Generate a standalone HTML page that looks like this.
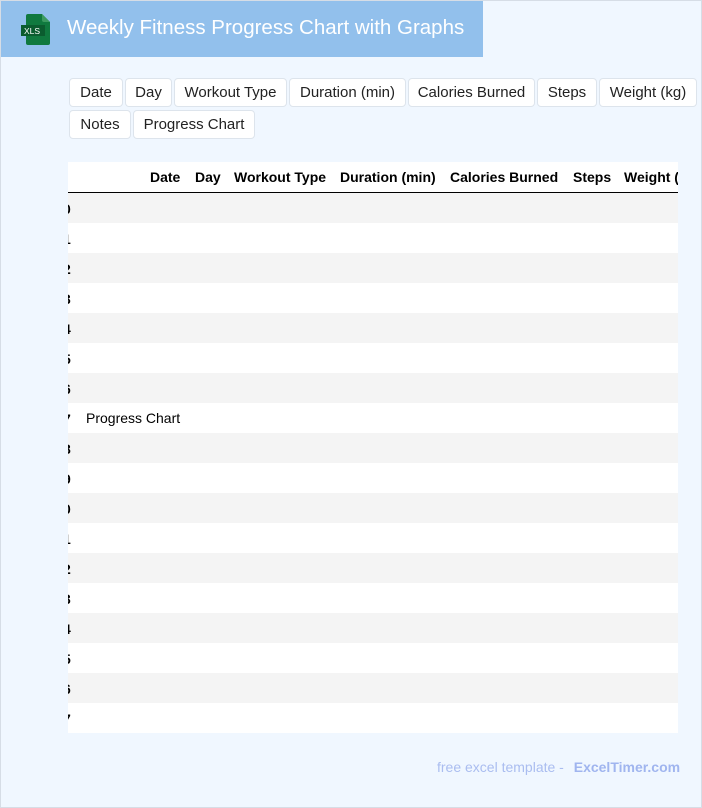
<!DOCTYPE html>
<html><head><meta charset="utf-8"><style>
*{margin:0;padding:0;box-sizing:border-box}
body{width:702px;height:808px;background:#f0f7ff;font-family:"Liberation Sans",sans-serif;position:relative;overflow:hidden}
.frame{position:absolute;left:0;top:0;width:702px;height:808px;border:1px solid #d6dde6}
.hdr{position:absolute;left:1px;top:1px;width:482px;height:56px;background:#92c0ec}
.hdr h1{position:absolute;left:66px;top:15px;font-size:20.5px;font-weight:normal;color:#fff;white-space:nowrap}
.btn{position:absolute;height:29px;background:#fff;border:1px solid #dde4ec;border-radius:4px;font-size:15px;color:#222;text-align:center;line-height:28px;white-space:nowrap}
.tbl{position:absolute;left:68px;top:162px;width:610px;height:571px;overflow:hidden;background:#fff}
.th{position:absolute;top:7px;font-weight:bold;font-size:14px;color:#000;white-space:nowrap}
.line{position:absolute;left:0;top:30px;width:610px;height:1px;background:#000}
.row{position:absolute;left:0;width:610px;height:30px}
.num{position:absolute;left:-5px;top:8px;font-size:14px;font-weight:bold;color:#000}
.ft{position:absolute;top:759px;left:437px;font-size:14px;color:#aabdf0;white-space:nowrap}
.ft b{color:#a0b5ef;margin-left:6px}
</style></head><body>
<div class="frame"></div>
<div class="hdr">
<svg style="position:absolute;left:20px;top:13px" width="30" height="32" viewBox="0 0 30 32">
<path d="M7 0H21L29 8V29Q29 31 27 31H7Q5 31 5 29V2Q5 0 7 0Z" fill="#10793f"/>
<path d="M21 0L29 8H23Q21 8 21 6Z" fill="#3c9a60"/>
<rect x="0" y="11" width="24" height="11" fill="#0b5c2f"/>
<text x="3" y="20" font-family="Liberation Sans" font-size="8.5" fill="#fff">XLS</text>
</svg>
<h1>Weekly Fitness Progress Chart with Graphs</h1>
</div>
<div class="btn" style="left:69px;top:78px;width:54px">Date</div>
<div class="btn" style="left:125px;top:78px;width:47px">Day</div>
<div class="btn" style="left:174px;top:78px;width:113px">Workout Type</div>
<div class="btn" style="left:289px;top:78px;width:117px">Duration (min)</div>
<div class="btn" style="left:408px;top:78px;width:127px">Calories Burned</div>
<div class="btn" style="left:537px;top:78px;width:60px">Steps</div>
<div class="btn" style="left:599px;top:78px;width:98px">Weight (kg)</div>
<div class="btn" style="left:69px;top:110px;width:62px">Notes</div>
<div class="btn" style="left:133px;top:110px;width:122px">Progress Chart</div>
<div class="tbl">
<div class="th" style="left:82px">Date</div>
<div class="th" style="left:127px">Day</div>
<div class="th" style="left:166px">Workout Type</div>
<div class="th" style="left:272px">Duration (min)</div>
<div class="th" style="left:382px">Calories Burned</div>
<div class="th" style="left:505px">Steps</div>
<div class="th" style="left:556px">Weight (kg)</div>
<div class="line"></div>
<div class="row" style="top:31px;background:#f4f4f4"><span class="num">0</span></div>
<div class="row" style="top:61px"><span class="num">1</span></div>
<div class="row" style="top:91px;background:#f4f4f4"><span class="num">2</span></div>
<div class="row" style="top:121px"><span class="num">3</span></div>
<div class="row" style="top:151px;background:#f4f4f4"><span class="num">4</span></div>
<div class="row" style="top:181px"><span class="num">5</span></div>
<div class="row" style="top:211px;background:#f4f4f4"><span class="num">6</span></div>
<div class="row" style="top:241px"><span class="num">7</span><span style="position:absolute;left:18px;top:7px;font-size:14px">Progress Chart</span></div>
<div class="row" style="top:271px;background:#f4f4f4"><span class="num">8</span></div>
<div class="row" style="top:301px"><span class="num">9</span></div>
<div class="row" style="top:331px;background:#f4f4f4"><span class="num">0</span></div>
<div class="row" style="top:361px"><span class="num">1</span></div>
<div class="row" style="top:391px;background:#f4f4f4"><span class="num">2</span></div>
<div class="row" style="top:421px"><span class="num">3</span></div>
<div class="row" style="top:451px;background:#f4f4f4"><span class="num">4</span></div>
<div class="row" style="top:481px"><span class="num">5</span></div>
<div class="row" style="top:511px;background:#f4f4f4"><span class="num">6</span></div>
<div class="row" style="top:541px"><span class="num">7</span></div>
</div>
<div class="ft">free excel template - <b>ExcelTimer.com</b></div>
</body></html>
